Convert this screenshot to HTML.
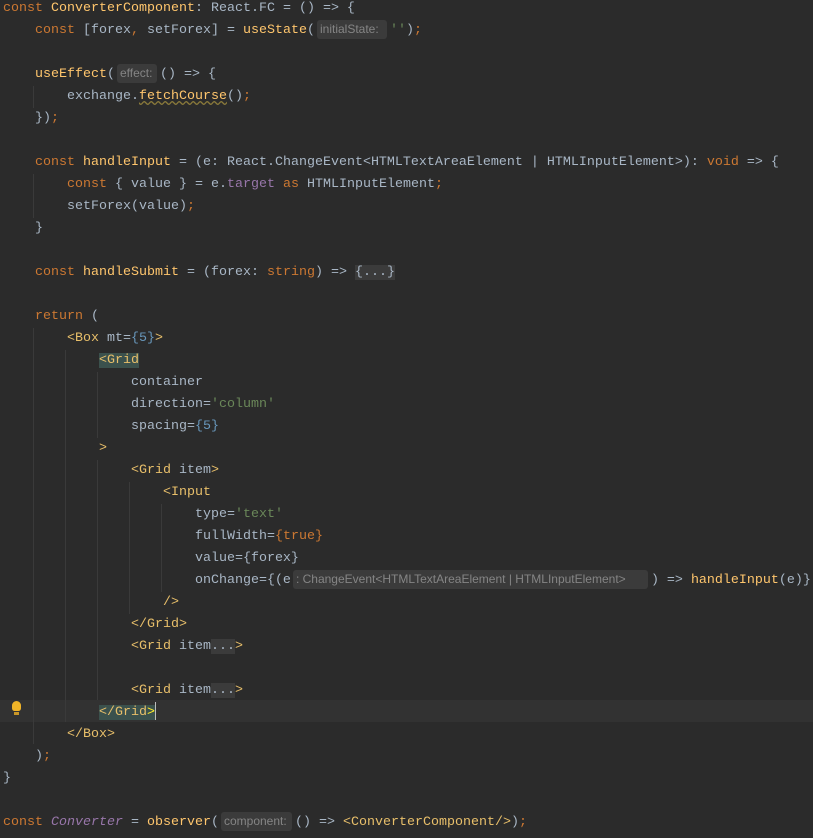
<!DOCTYPE html>
<html><head><style>
body{margin:0;background:#2b2b2b;width:813px;height:836px;overflow:hidden;position:relative;font-family:"Liberation Mono",monospace;font-size:13.33px;color:#a9b7c6}
#w{position:absolute;left:0;top:2px;width:813px;height:836px}
.l{position:absolute;left:3px;height:22px;line-height:22px;white-space:pre}
.k{color:#cc7832}.f{color:#ffc66d}.s{color:#6a8759}.n{color:#6897bb}.t{color:#e8bf6a}.p{color:#9876aa}.i{color:#9876aa;font-style:italic}
.h{display:inline-block;background:#3b3b3b;color:#858585;font-family:"Liberation Sans",sans-serif;font-size:12px;height:19px;line-height:19px;vertical-align:middle;border-radius:3px;padding:0 3px;margin:0 3px 0 2px;box-sizing:border-box;overflow:hidden}
.c{background:#3b3b3b}
.g{position:absolute;width:1px;background:#3a3a3a}
.hl{background:#3b514d}
</style></head><body><div id="w">
<div style="position:absolute;left:0;top:698px;width:813px;height:22px;background:#323232"></div>
<div class="g" style="left:33px;top:84px;height:22px"></div>
<div class="g" style="left:33px;top:172px;height:44px"></div>
<div class="g" style="left:33px;top:326px;height:416px"></div>
<div class="g" style="left:65px;top:348px;height:372px"></div>
<div class="g" style="left:97px;top:370px;height:66px"></div>
<div class="g" style="left:97px;top:458px;height:240px"></div>
<div class="g" style="left:129px;top:480px;height:132px"></div>
<div class="g" style="left:161px;top:502px;height:88px"></div>
<div class="l" style="top:-4px"><span class="k">const </span><span class="f">ConverterComponent</span>: React.FC = () => {</div>
<div class="l" style="top:18px">    <span class="k">const </span>[forex<span class="k">, </span>setForex] = <span class="f">useState</span>(<span class="h" style="width:70px">initialState:</span><span class="s">''</span>)<span class="k">;</span></div>
<div class="l" style="top:62px">    <span class="f">useEffect</span>(<span class="h" style="width:40px">effect:</span>() => {</div>
<div class="l" style="top:84px">        exchange.<span class="f" style="text-decoration:underline wavy #8a7a3a">fetchCourse</span>()<span class="k">;</span></div>
<div class="l" style="top:106px">    })<span class="k">;</span></div>
<div class="l" style="top:150px">    <span class="k">const </span><span class="f">handleInput</span> = (e: React.ChangeEvent&lt;HTMLTextAreaElement | HTMLInputElement&gt;): <span class="k">void</span> => {</div>
<div class="l" style="top:172px">        <span class="k">const </span>{ value } = e.<span class="p">target</span> <span class="k">as </span>HTMLInputElement<span class="k">;</span></div>
<div class="l" style="top:194px">        setForex(value)<span class="k">;</span></div>
<div class="l" style="top:216px">    }</div>
<div class="l" style="top:260px">    <span class="k">const </span><span class="f">handleSubmit</span> = (forex: <span class="k">string</span>) => <span class="c">{...}</span></div>
<div class="l" style="top:304px">    <span class="k">return </span>(</div>
<div class="l" style="top:326px">        <span class="t">&lt;Box </span>mt=<span class="n">{5}</span><span class="t">&gt;</span></div>
<div class="l" style="top:348px">            <span class="t hl">&lt;Grid</span></div>
<div class="l" style="top:370px">                container</div>
<div class="l" style="top:392px">                direction=<span class="s">'column'</span></div>
<div class="l" style="top:414px">                spacing=<span class="n">{5}</span></div>
<div class="l" style="top:436px">            <span class="t">&gt;</span></div>
<div class="l" style="top:458px">                <span class="t">&lt;Grid </span>item<span class="t">&gt;</span></div>
<div class="l" style="top:480px">                    <span class="t">&lt;Input</span></div>
<div class="l" style="top:502px">                        type=<span class="s">'text'</span></div>
<div class="l" style="top:524px">                        fullWidth=<span class="k">{true}</span></div>
<div class="l" style="top:546px">                        value={forex}</div>
<div class="l" style="top:568px">                        onChange={(e<span class="h" style="width:355px">: ChangeEvent&lt;HTMLTextAreaElement | HTMLInputElement&gt;</span>) => <span class="f">handleInput</span>(e)}</div>
<div class="l" style="top:590px">                    <span class="t">/&gt;</span></div>
<div class="l" style="top:612px">                <span class="t">&lt;/Grid&gt;</span></div>
<div class="l" style="top:634px">                <span class="t">&lt;Grid </span>item<span class="c">...</span><span class="t">&gt;</span></div>
<div class="l" style="top:678px">                <span class="t">&lt;Grid </span>item<span class="c">...</span><span class="t">&gt;</span></div>
<div class="l" style="top:700px">            <span class="t hl">&lt;/Grid<span style="color:#ffef28">&gt;</span></span><span style="display:inline-block;width:1px;height:18px;background:#bbb;vertical-align:middle"></span></div>
<div class="l" style="top:722px">        <span class="t">&lt;/Box&gt;</span></div>
<div class="l" style="top:744px">    )<span class="k">;</span></div>
<div class="l" style="top:766px">}</div>
<div class="l" style="top:810px"><span class="k">const </span><span class="i">Converter</span> = <span class="f">observer</span>(<span class="h" style="width:71px">component:</span>() => <span class="t">&lt;ConverterComponent/&gt;</span>)<span class="k">;</span></div>
<div style="position:absolute;left:12px;top:699px;width:9px;height:10px;background:#f0b428;border-radius:5px 5px 3px 3px"></div>
<div style="position:absolute;left:14px;top:710px;width:5px;height:3px;background:#c89628"></div>
</div></body></html>
